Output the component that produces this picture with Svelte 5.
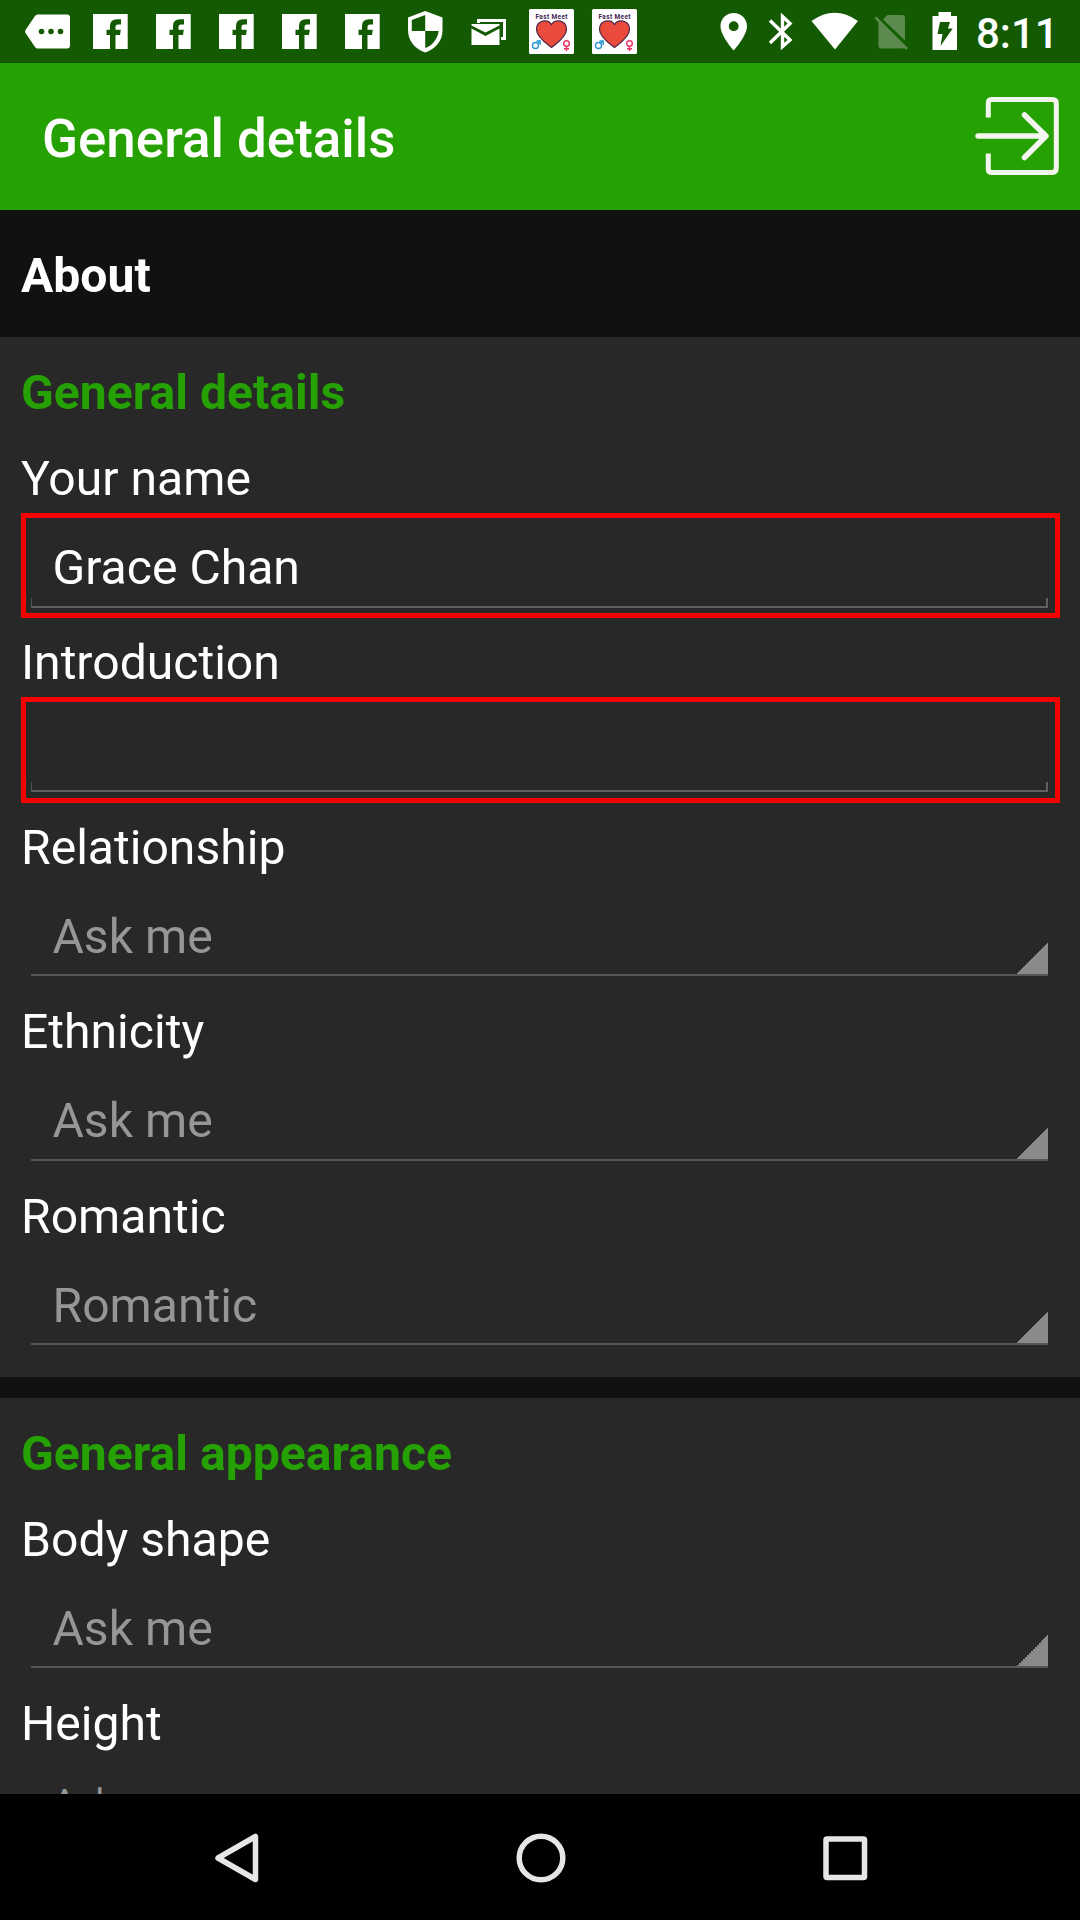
<script>
  const sections = [
    {
      title: 'General details',
      fields: [
        { label: 'Your name', value: 'Grace Chan', kind: 'input' },
        { label: 'Introduction', value: '', kind: 'input' },
        { label: 'Relationship', value: 'Ask me', kind: 'select' },
        { label: 'Ethnicity', value: 'Ask me', kind: 'select' },
        { label: 'Romantic', value: 'Romantic', kind: 'select' }
      ]
    },
    {
      title: 'General appearance',
      fields: [
        { label: 'Body shape', value: 'Ask me', kind: 'select' },
        { label: 'Height', value: 'Ask me', kind: 'select compact' }
      ]
    }
  ];
  const notifications = ['more', 'fb', 'fb', 'fb', 'fb', 'fb', 'shield', 'mail', 'meet', 'meet'];
</script>

<div class="screen">
  <div class="status">
    <div class="group">
      {#each notifications as icon}
        <svg class="note" viewBox="0 0 63 63">
          {#if icon === 'more'}
            <path fill="#fff" d="M21.500 14.500H51Q54 14.500 54 17.500V45.500Q54 48.500 51 48.500H21.500Q20 48.500 19 47L9.500 33Q8.600 31.500 9.500 30L19 16Q20 14.500 21.500 14.500Z" />
            <g fill="#145a02"><circle cx="25.500" cy="31.500" r="2.800" /><circle cx="35" cy="31.500" r="2.800" /><circle cx="44.500" cy="31.500" r="2.800" /></g>
          {:else if icon === 'fb'}
            <path fill="#fff" d="M14 14H48.700V49H36.500V35H41L41.800 29.800H36.500V27Q36.500 24.500 39 24.500H42V19.200H38Q31 19.200 31 26V29.800H27.500V35H31V49H14Z" />
          {:else if icon === 'shield'}
            <path fill="#fff" d="M31.200 11L48.500 17.500V30C48.500 41 41.500 49 31.200 52.500C21 49 14 41 14 30V17.500Z" />
            <path fill="#145a02" d="M31.200 15V31H17.800V20ZM31.200 31H44.700C43.500 39 38.500 45.500 31.200 48Z" />
          {:else if icon === 'mail'}
            <path fill="none" stroke="#fff" stroke-width="3" d="M21.500 23V20.500H47.500V38.500H44" />
            <path fill="#fff" d="M14.500 24H42.500V25.500L28.500 32.500L14.500 25.500ZM14.500 28.500L28.500 36L42.500 28.500V45H14.500Z" />
          {:else}
            <g transform="translate(-4 0)">
              <rect x="13" y="9" width="45" height="45" rx="1.500" fill="#fff" />
              <text x="35.500" y="19" text-anchor="middle" textLength="32" font-size="6.500" font-weight="700" fill="#3d2350">Fast Meet</text>
              <path fill="#ea4b3d" stroke="#4d2547" stroke-width="1.200" d="M35.500 47.500C31 44 20.500 37 20.500 29.500C20.500 20 32 18.500 35.500 24.500C39 18.500 50.500 20 50.500 29.500C50.500 37 40 44 35.500 47.500Z" />
              <g fill="none" stroke="#2999d2" stroke-width="1.400"><circle cx="19.500" cy="45.500" r="3" /><path d="M21.500 43L24 41M20.500 41H24.200V45" /></g>
              <g fill="none" stroke="#ed3262" stroke-width="1.400"><circle cx="50.500" cy="43.500" r="2.800" /><path d="M50.500 46.500V51M48 48.700H53" /></g>
            </g>
          {/if}
        </svg>
      {/each}
    </div>
    <div class="group">
      <svg width="47" height="63" viewBox="0 0 47 63">
        <path fill="#fff" fill-rule="evenodd" d="M23.700 13C16.300 13 10.500 18.700 10.500 26C10.500 36 23.700 50.500 23.700 50.500C23.700 50.500 37 36 37 26C37 18.700 31 13 23.700 13ZM23.700 21.300A4.900 4.900 0 1 1 23.700 31.100A4.900 4.900 0 1 1 23.700 21.300Z" />
      </svg>
      <svg width="46" height="63" viewBox="0 0 46 63">
        <path fill="none" stroke="#fff" stroke-width="3.400" d="M13 20.500L33 40L25.500 46.500V16.500L33 23.500L13 43" />
      </svg>
      <svg width="63" height="63" viewBox="0 0 63 63">
        <path fill="#fff" d="M8.500 21Q31.500 4.500 55 21L32 49.500Z" />
      </svg>
      <svg width="54" height="63" viewBox="0 0 54 63" fill="#5b8b4d">
        <path d="M21.500 15H36Q39 15 39 18V40.500L17 19.500ZM12.500 21L39 47Q38 48.500 36 48.500H15.500Q12.500 48.500 12.500 45.500Z" />
        <path fill="none" stroke="#5b8b4d" stroke-width="2.500" d="M9.500 17.500L41 49" />
      </svg>
      <svg width="48" height="63" viewBox="0 0 48 63">
        <path fill="#fff" fill-rule="evenodd" d="M12.500 16H18.500V12H31V16H37V50H12.500ZM20 22H30L28 28.500H32.700L20.500 46L22.500 34H17.500Z" />
      </svg>
      <span class="clock">8:11</span>
    </div>
  </div>

  <header>
    <h1>General details</h1>
    <svg width="90" height="90" viewBox="0 0 90 90" fill="none" stroke="#f5f5f0">
      <path stroke-width="5" d="M13.300 24.500V10Q13.300 6.500 16.500 6.500H77Q81.300 6.500 81.300 10V75Q81.300 79.500 77 79.500H17Q13.300 79.500 13.300 76V60.500" />
      <path stroke-width="5.500" stroke-linecap="round" stroke-linejoin="round" d="M3 43H70M49.500 22L71 43L49.500 64.500" />
    </svg>
  </header>

  <main>
    <h2>About</h2>
    {#each sections as section}
      <section>
        <h3>{section.title}</h3>
        {#each section.fields as field}
          <div class="label">{field.label}</div>
          <div class="box {field.kind}">
            <div class="value">{field.value}</div>
          </div>
        {/each}
      </section>
    {/each}
  </main>

  <nav>
    <svg width="54" height="54" viewBox="0 0 54 54"><path d="M45.500 5.500V48.500L8 27Z" /></svg>
    <svg width="54" height="54" viewBox="0 0 54 54"><circle cx="27" cy="27" r="21.800" /></svg>
    <svg width="54" height="54" viewBox="0 0 54 54"><rect x="8" y="8" width="38.500" height="38.500" rx="1" /></svg>
  </nav>
</div>

<style>
  :global(body) { margin: 0; background: #000; }
  .screen {
    width: 1080px; height: 1920px; overflow: hidden;
    display: flex; flex-direction: column;
    font-family: Roboto, sans-serif; color: #fff; background: #111;
  }
  svg { display: block; flex: none; }
  .status {
    height: 63px; flex: none; display: flex; justify-content: space-between;
    background: #145a02; padding: 0 28px 0 16px;
  }
  .group { display: flex; }
  .note { width: 63px; height: 63px; }
  .clock { width: 76px; margin-left: 8px; font-size: 42px; font-weight: 500; line-height: 67px; white-space: nowrap; }
  header {
    height: 147px; flex: none; box-sizing: border-box; display: flex; align-items: center;
    justify-content: space-between; padding: 2px 15px 0 42px; background: #25a103;
  }
  h1 { margin: 2px 0 0; font-size: 52.900px; font-weight: 500; line-height: 62px; }
  main { flex: 1; min-height: 0; overflow: hidden; }
  h2 { margin: 0; height: 127px; padding-left: 21px; font-size: 48.100px; line-height: 132px; font-weight: 700; }
  section { background: #282828; padding-bottom: 21px; margin-bottom: 21px; }
  h3 { margin: 0; padding: 15px 0 0 21px; font-size: 48.100px; line-height: 82px; font-weight: 700; color: #25a103; }
  .label { padding: 11px 0 0 21px; font-size: 48.100px; line-height: 68px; }
  .box {
    box-sizing: border-box; height: 105.400px; margin: 0 20px 0 21px;
    border: 5px solid transparent; padding: 0 7px 0 5px; font-size: 48.100px;
  }
  .input { border-color: #f60000; }
  .value {
    box-sizing: border-box; height: 89.500px; padding: 6px 0 0 21.500px; line-height: 88px;
    border-bottom: 2px solid #606060;
    background: linear-gradient(#505050, #505050) 0 100% / 1px 8px no-repeat,
      linear-gradient(#606060, #606060) 100% 100% / 2px 8px no-repeat;
  }
  .select .value {
    color: #969696; border-color: #555;
    background: linear-gradient(135deg, transparent 50%, #8a8a8a 50%) 100% 100% / 33px 33px no-repeat border-box;
  }
  .compact .value { padding-top: 0; font-size: 36.750px; line-height: 80px; }
  nav {
    height: 126px; flex: none; display: flex; align-items: center;
    justify-content: space-between; padding: 1px 208px 0 210px; box-sizing: border-box; background: #000;
  }
  nav svg { fill: none; stroke: #e6e6e6; stroke-width: 5.500; stroke-linejoin: round; }
</style>
